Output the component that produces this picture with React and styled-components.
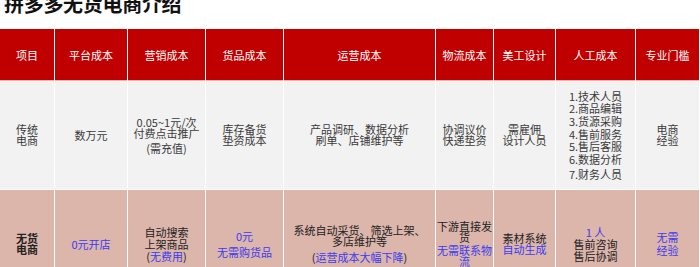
import React from 'react';
import styled, { createGlobalStyle } from 'styled-components';

//________ Data ________
const COLUMNS = [54, 72, 77, 77, 151, 57, 61, 79, 63];

const HEADERS = ['项目', '平台成本', '营销成本', '货品成本', '运营成本', '物流成本', '美工设计', '人工成本', '专业门槛'];

const STAFF = ['1.技术人员', '2.商品编辑', '3.货源采购', '4.售前服务', '5.售后客服', '6.数据分析', '7.财务人员'];

////////////////////////////////////////////////////////////////////////////////////

const App = () => {
  return (
    <>
      <GlobalStyle />
      <Page>
        <Title>拼多多无货电商介绍</Title>
        <Table>
          {HEADERS.map((h) => (
            <Cell key={h} $tone='head'>
              {h}
            </Cell>
          ))}

          {/* traditional e-commerce */}
          <Cell $tone='plain'>
            <Txt>传统<br />电商</Txt>
          </Cell>
          <Cell $tone='plain'>
            <Txt>数万元</Txt>
          </Cell>
          <Cell $tone='plain'>
            <Txt>0.05~1元/次<br />付费点击推广</Txt>
            <Txt $gap={4}>(需充值)</Txt>
          </Cell>
          <Cell $tone='plain'>
            <Txt>库存备货<br />垫资成本</Txt>
          </Cell>
          <Cell $tone='plain'>
            <Txt>产品调研、数据分析<br />刷单、店铺维护等</Txt>
          </Cell>
          <Cell $tone='plain'>
            <Txt>协调议价<br />快递垫资</Txt>
          </Cell>
          <Cell $tone='plain'>
            <Txt>需雇佣<br />设计人员</Txt>
          </Cell>
          <Cell $tone='plain'>
            <List>
              {STAFF.map((s, i) => (
                <li key={s} className={i === STAFF.length - 1 ? 'last' : ''}>
                  {s}
                </li>
              ))}
            </List>
          </Cell>
          <Cell $tone='plain'>
            <Txt>电商<br />经验</Txt>
          </Cell>

          {/* dropshipping */}
          <Cell $tone='accent'>
            <Txt $bold>无货<br />电商</Txt>
          </Cell>
          <Cell $tone='accent'>
            <Txt $blue>0元开店</Txt>
          </Cell>
          <Cell $tone='accent'>
            <Txt $lh={12}>
              自动搜索<br />上架商品<br />(<Blue>无费用</Blue>)
            </Txt>
          </Cell>
          <Cell $tone='accent'>
            <Txt $blue>0元</Txt>
            <Txt $blue $gap={5}>无需购货品</Txt>
          </Cell>
          <Cell $tone='accent'>
            <Txt>系统自动采货、筛选上架、<br />多店维护等</Txt>
            <Txt $gap={5}>(<Blue>运营成本大幅下降</Blue>)</Txt>
          </Cell>
          <Cell $tone='accent'>
            <Txt>下游直接发货</Txt>
            <Txt $blue $gap={2}>无需联系物流</Txt>
          </Cell>
          <Cell $tone='accent'>
            <Txt>素材系统</Txt>
            <Txt $blue>自动生成</Txt>
          </Cell>
          <Cell $tone='accent'>
            <Txt $blue $lh={13}>1 人</Txt>
            <Txt $lh={11.5}>售前咨询<br />售后协调</Txt>
          </Cell>
          <Cell $tone='accent'>
            <Txt $blue $lh={13}>无需<br />经验</Txt>
          </Cell>
        </Table>
      </Page>
    </>
  );
};

/////////////////////////// styled components /////////////////////////////////////

const GlobalStyle = createGlobalStyle`
  html, body {
    margin: 0;
    padding: 0;
    background: #ffffff;
    overflow: hidden;
  }
  body {
    font-family: 'Noto Sans CJK SC', 'Noto Sans', sans-serif;
  }
`;

const Page = styled.div`
  width: 700px;
  height: 267px;
  overflow: hidden;
`;

const Title = styled.h1`
  margin: -6px 0 15px 4px;
  font-size: 20px;
  line-height: 20px;
  font-weight: 700;
  color: #111111;
  letter-spacing: -0.3px;
`;

const Table = styled.div`
  display: grid;
  grid-template-columns: ${COLUMNS.map((w) => `${w}px`).join(' ')};
  grid-template-rows: 51px 108px 108px;
  gap: 1px;
  width: 699px;
  background: #ffffff;
`;

const TONES = {
  head: { bg: '#c00000', fg: '#ffffff' },
  plain: { bg: '#f2f2f2', fg: '#3a3a3a' },
  accent: { bg: '#dcb5ab', fg: '#222222' },
};

const Cell = styled.div`
  display: flex;
  flex-direction: column;
  align-items: center;
  justify-content: center;
  text-align: center;
  padding: 0;
  font-size: 11px;
  line-height: 12px;
  background: ${({ $tone }) => TONES[$tone].bg};
  color: ${({ $tone }) => TONES[$tone].fg};
  ${({ $tone }) => $tone === 'plain' && 'border-top: 1px solid #eeb4b4; margin-top: -1px;'}
`;

const Txt = styled.div`
  line-height: ${({ $lh }) => ($lh ? `${$lh}px` : '11px')};
  margin-top: ${({ $gap }) => ($gap ? `${$gap}px` : '0')};
  font-weight: ${({ $bold }) => ($bold ? 700 : 400)};
  color: ${({ $blue }) => ($blue ? '#3b3bf2' : 'inherit')};
`;

const Blue = styled.span`
  color: #3b3bf2;
`;

const List = styled.ul`
  margin: 0;
  padding: 0;
  list-style: none;
  text-align: left;

  & li {
    line-height: 12.6px;
    &.last {
      margin-top: 2.4px;
    }
  }
`;

export default App;
